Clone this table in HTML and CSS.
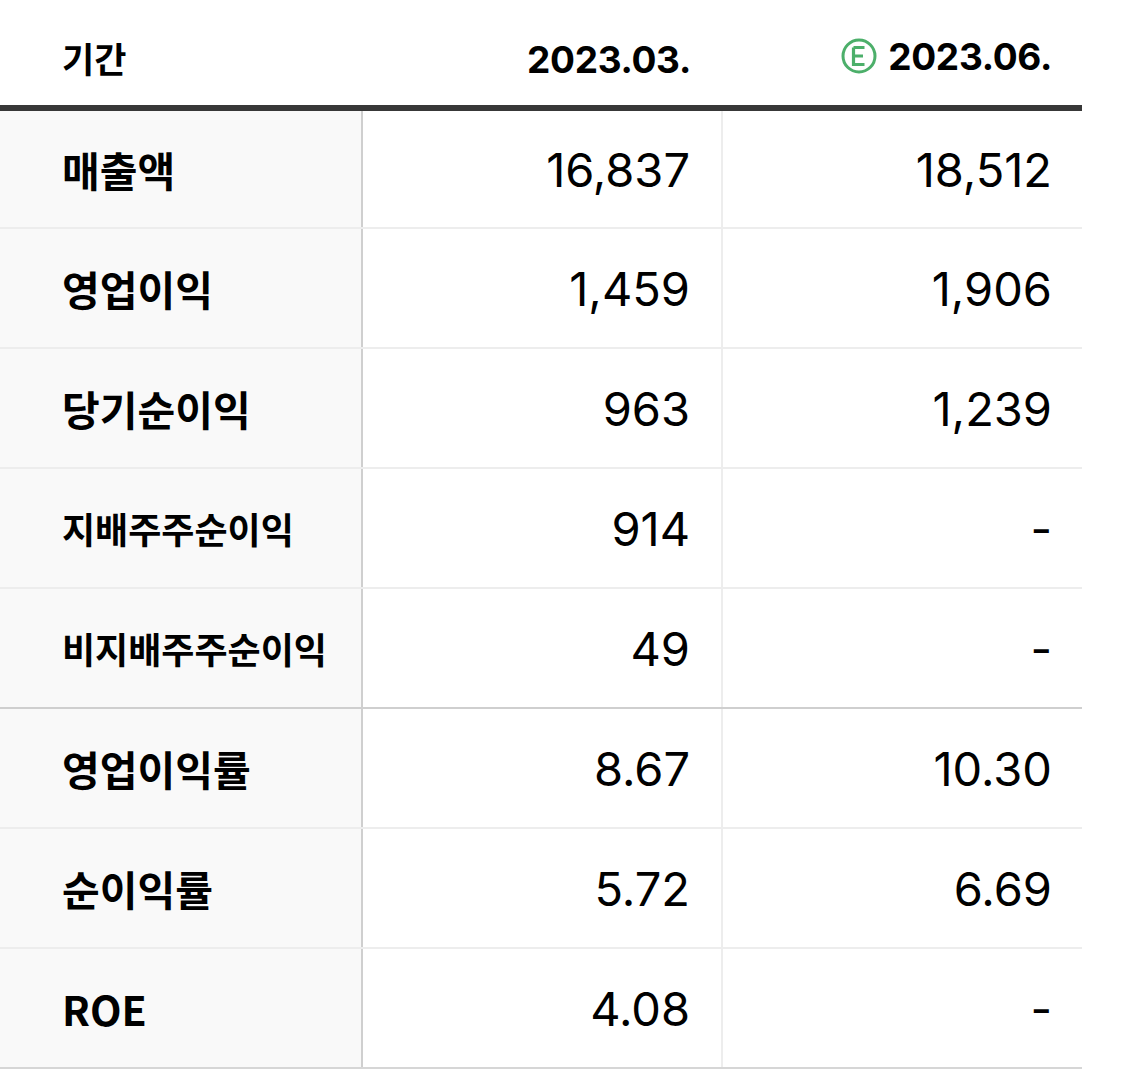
FILE: index.html
```html
<!DOCTYPE html>
<html lang="ko">
<head>
<meta charset="utf-8">
<link rel="stylesheet" href="styles.css">
</head>
<body>
<table class="fin">
  <colgroup>
    <col class="c-label">
    <col class="c-val">
    <col class="c-val">
  </colgroup>
  <thead>
    <tr>
      <th class="h-label">기간</th>
      <th class="h-val">2023.03.</th>
      <th class="h-val h-last"><span class="est"><svg class="est-icon" viewBox="0 0 36 36" width="36" height="36" aria-hidden="true"><circle cx="18" cy="18" r="16" fill="none" stroke="#4caf6a" stroke-width="3"/><path d="M12.5 9.5H23.5M12.5 9.5V26.5H23.5M12.5 18H22" fill="none" stroke="#4caf6a" stroke-width="3.2"/></svg>2023.06.</span></th>
    </tr>
  </thead>
  <tbody>
    <tr><th class="lab">매출액</th><td>16,837</td><td>18,512</td></tr>
    <tr><th class="lab">영업이익</th><td>1,459</td><td>1,906</td></tr>
    <tr><th class="lab">당기순이익</th><td>963</td><td>1,239</td></tr>
    <tr><th class="lab sub">지배주주순이익</th><td>914</td><td>-</td></tr>
    <tr class="group-end"><th class="lab sub">비지배주주순이익</th><td>49</td><td>-</td></tr>
    <tr><th class="lab">영업이익률</th><td>8.67</td><td>10.30</td></tr>
    <tr><th class="lab">순이익률</th><td>5.72</td><td>6.69</td></tr>
    <tr class="last"><th class="lab">ROE</th><td>4.08</td><td>-</td></tr>
  </tbody>
</table>
</body>
</html>
```

FILE: styles.css
```css
html, body {
  margin: 0;
  padding: 0;
  background: #ffffff;
}

body {
  font-family: Inter, "Noto Sans CJK KR", sans-serif;
  color: #000;
}

.fin {
  width: 1082px;
  border-collapse: collapse;
  table-layout: fixed;
}

.c-label { width: 362px; }
.c-val { width: 360px; }

.fin thead tr {
  height: 108px;
}

.fin thead th {
  padding: 0;
  border-bottom: 6px solid #383838;
  font-weight: 700;
  vertical-align: middle;
}

.h-label {
  text-align: left;
  padding: 9px 0 0 62px !important;
  font-family: "Noto Sans CJK KR", sans-serif;
  font-size: 35px;
}

.h-val {
  text-align: right;
  padding: 13px 31px 0 0 !important;
  font-size: 37px;
  letter-spacing: -0.3px;
}

.h-val.h-last {
  padding-right: 30px !important;
}

.est {
  display: inline-flex;
  align-items: center;
  gap: 11px;
}

.est-icon {
  display: block;
  width: 36px;
  height: 36px;
  position: relative;
  top: -1px;
}

.fin tbody tr {
  height: 120px;
}

.fin tbody th,
.fin tbody td {
  padding: 0;
  border-bottom: 2px solid #ededed;
  vertical-align: middle;
}

.lab {
  background: #f9f9f9;
  border-right: 2px solid #cfcfcf;
  text-align: left;
  padding-left: 62px !important;
  font-family: "Noto Sans CJK KR", sans-serif;
  font-weight: 600;
  font-size: 41px;
  white-space: nowrap;
}

.lab.sub {
  font-size: 36px;
  font-weight: 600;
}

.fin tbody td {
  text-align: right;
  padding-right: 31px;
  font-size: 47px;
  font-weight: 400;
}

.fin tbody td + td {
  padding-right: 30px;
}

.fin tbody td:nth-child(2) {
  border-right: 2px solid #ededed;
}

.fin tbody tr.group-end th,
.fin tbody tr.group-end td {
  border-bottom-color: #cfcfcf;
}

.fin tbody tr.last th,
.fin tbody tr.last td {
  border-bottom-color: #d6d6d6;
}
```
